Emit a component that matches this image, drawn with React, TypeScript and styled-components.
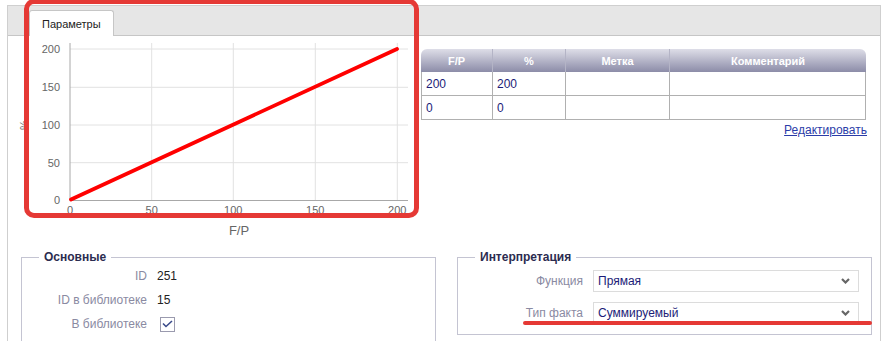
import styled, { createGlobalStyle } from 'styled-components';

const Global = createGlobalStyle`
  html, body { margin: 0; padding: 0; background: #fff; }
  body { font-family: "Liberation Sans", Arial, sans-serif; font-size: 12px; color: #222; }
`;

const Page = styled.div`position: relative; width: 881px; height: 341px; overflow: hidden; padding: 5px 0 0 7px; box-sizing: border-box;`;
const Panel = styled.div`
  width: 874px; height: 400px; box-sizing: border-box;
  border: 1px solid #cfcfcf; border-bottom: 0;
`;
const TabBar = styled.div`
  height: 29px; background: #e6e6e6; border-bottom: 1px solid #c6c6c6;
  display: flex; align-items: flex-end; padding-left: 21px;
`;
const Tab = styled.div`
  height: 25px; margin-bottom: -1px; padding: 0 12px; background: #fff;
  border: 1px solid #c6c6c6; border-bottom: 0; border-radius: 3px 3px 0 0;
  display: flex; align-items: center; color: #222; font-size: 11px;
`;
const TopRow = styled.div`display: flex;`;
const ChartSvg = styled.svg`display: block; flex: none;`;
const TableCol = styled.div`flex: 1; margin: 13px 13px 0 0; display: flex; flex-direction: column;`;
const Grid = styled.table`
  width: 445px; border-collapse: separate; border-spacing: 0; table-layout: fixed;
  font-size: 12px;
  th {
    height: 23px; padding: 0; color: #fff; font-weight: bold; font-size: 11px;
    background: linear-gradient(#dedee8, #8c8ca8);
    border-right: 1px solid #b4b4c6;
  }
  th:first-child { border-top-left-radius: 6px; }
  th:last-child { border-top-right-radius: 6px; border-right: 0; }
  td {
    height: 23px; padding: 0 0 0 4px; color: #1c1c78;
    border-right: 1px solid #b0b0b0; border-bottom: 1px solid #b0b0b0;
  }
  td:first-child { border-left: 1px solid #b0b0b0; }
`;
const EditLink = styled.a`
  align-self: flex-end; margin-top: 3px; color: #2b3ca8; text-decoration: underline; font-size: 12px; cursor: pointer;
`;
const Bottom = styled.div`display: flex; gap: 21px; padding: 0 9px 0 13px; margin-top: 9px; align-items: flex-start;`;
const Group = styled.fieldset<{ $pad: string }>`
  width: 415px; box-sizing: border-box; margin: 0; padding: ${p => p.$pad};
  border: 1px solid #c4c4d2; flex: none;
`;
const Legend = styled.legend`
  margin-left: 17px; padding: 0 5px; font-weight: bold; color: #2c2c50; font-size: 12px;
`;
const Form = styled.div<{ $row: number; $gap: number }>`
  display: grid; grid-template-columns: 125px 1fr; column-gap: 10px;
  grid-auto-rows: ${p => p.$row}px; row-gap: ${p => p.$gap}px; align-items: center;
`;
const Label = styled.div`text-align: right; color: #8a8aa2; font-size: 12px; white-space: nowrap;`;
const Value = styled.div`color: #222; font-size: 12px;`;
const Check = styled.div`
  width: 13px; height: 13px; margin-left: 3px; border: 1px solid #9a9aae; background: #fff;
  display: flex; align-items: center; justify-content: center;
`;
const Line = styled.div`grid-column: 2; height: 0; border-top: 1px solid #dcdcdc; margin-right: 13px; align-self: end;`;
const Select = styled.div`
  height: 20px; margin-right: 12px; border: 1px solid #dcdcdc; background: #fff;
  display: flex; align-items: center; justify-content: space-between; padding: 0 8px 0 4px;
  color: #1c1c78; font-size: 12px;
`;
const Annot = styled.div`
  position: absolute; left: 24px; top: -1px; width: 395px; height: 219px; box-sizing: border-box;
  border: 5px solid #e53935; border-radius: 10px; pointer-events: none;
`;
const Underline = styled.div`
  position: absolute; left: 523px; top: 321px; width: 349px; height: 4px;
  background: #e53935; border-radius: 2px; pointer-events: none;
`;

const xs = [70, 151.7, 233.3, 315.3, 397.3];
const ys = [200, 162.7, 125, 87.3, 49];
const ticks = ['0', '50', '100', '150', '200'];
const font = 'Liberation Sans, Arial, sans-serif';

function Chart() {
  return (
    <ChartSvg width={413} height={205} viewBox="8 36 413 205">
      {ys.slice(1).map(y => <line key={y} x1={70} x2={408} y1={y} y2={y} stroke="#e2e2e2" />)}
      {xs.slice(1).map(x => <line key={x} x1={x} x2={x} y1={43} y2={200} stroke="#e2e2e2" />)}
      <line x1={70} x2={70} y1={43} y2={200.5} stroke="#a8a8a8" />
      <line x1={70} x2={408} y1={200.5} y2={200.5} stroke="#a8a8a8" />
      {ys.map((y, i) => (
        <text key={y} x={60} y={y + 4} textAnchor="end" fontSize={11} fill="#666" fontFamily={font}>{ticks[i]}</text>
      ))}
      {xs.map((x, i) => (
        <text key={x} x={x} y={214} textAnchor="middle" fontSize={11} fill="#666" fontFamily={font}>{ticks[i]}</text>
      ))}
      <text x={28} y={125} transform="rotate(-90 28 125)" textAnchor="middle" fontSize={11} fill="#666" fontFamily={font}>%</text>
      <text x={239} y={235} textAnchor="middle" fontSize={13} fill="#666" fontFamily={font}>F/P</text>
      <line x1={71} y1={199.5} x2={397} y2={49} stroke="#ff0000" strokeWidth={3.8} strokeLinecap="round" />
    </ChartSvg>
  );
}

function Chevron() {
  return (
    <svg width="9" height="6" viewBox="0 0 9 6">
      <path d="M1 1 L4.5 4.5 L8 1" fill="none" stroke="#666" strokeWidth="2.2" />
    </svg>
  );
}

const rows = [
  { fp: '200', pct: '200' },
  { fp: '0', pct: '0' },
];

export default function App() {
  return (
    <>
      <Global />
      <Page>
        <Panel>
          <TabBar><Tab>Параметры</Tab></TabBar>
          <TopRow>
            <Chart />
            <TableCol>
              <Grid>
                <colgroup>
                  <col style={{ width: 72 }} /><col style={{ width: 73 }} /><col style={{ width: 104 }} /><col style={{ width: 196 }} />
                </colgroup>
                <thead>
                  <tr><th>F/P</th><th>%</th><th>Метка</th><th>Комментарий</th></tr>
                </thead>
                <tbody>
                  {rows.map(r => (
                    <tr key={r.fp}><td>{r.fp}</td><td>{r.pct}</td><td></td><td></td></tr>
                  ))}
                </tbody>
              </Grid>
              <EditLink>Редактировать</EditLink>
            </TableCol>
          </TopRow>
          <Bottom>
            <Group $pad="0 0 20px 0">
              <Legend>Основные</Legend>
              <Form $row={24} $gap={0}>
                <Label>ID</Label><Value>251</Value>
                <Label>ID в библиотеке</Label><Value>15</Value>
                <Label>В библиотеке</Label>
                <Check>
                  <svg width="11" height="8" viewBox="0 0 11 8"><path d="M1 3.5 L4 6.5 L10 1" fill="none" stroke="#3a4a8a" strokeWidth="1.6" /></svg>
                </Check>
                <Line />
              </Form>
            </Group>
            <Group $pad="6px 0 10px 0">
              <Legend>Интерпретация</Legend>
              <Form $row={22} $gap={10}>
                <Label>Функция</Label><Select>Прямая<Chevron /></Select>
                <Label>Тип факта</Label><Select>Суммируемый<Chevron /></Select>
              </Form>
            </Group>
          </Bottom>
        </Panel>
        <Annot />
        <Underline />
      </Page>
    </>
  );
}
